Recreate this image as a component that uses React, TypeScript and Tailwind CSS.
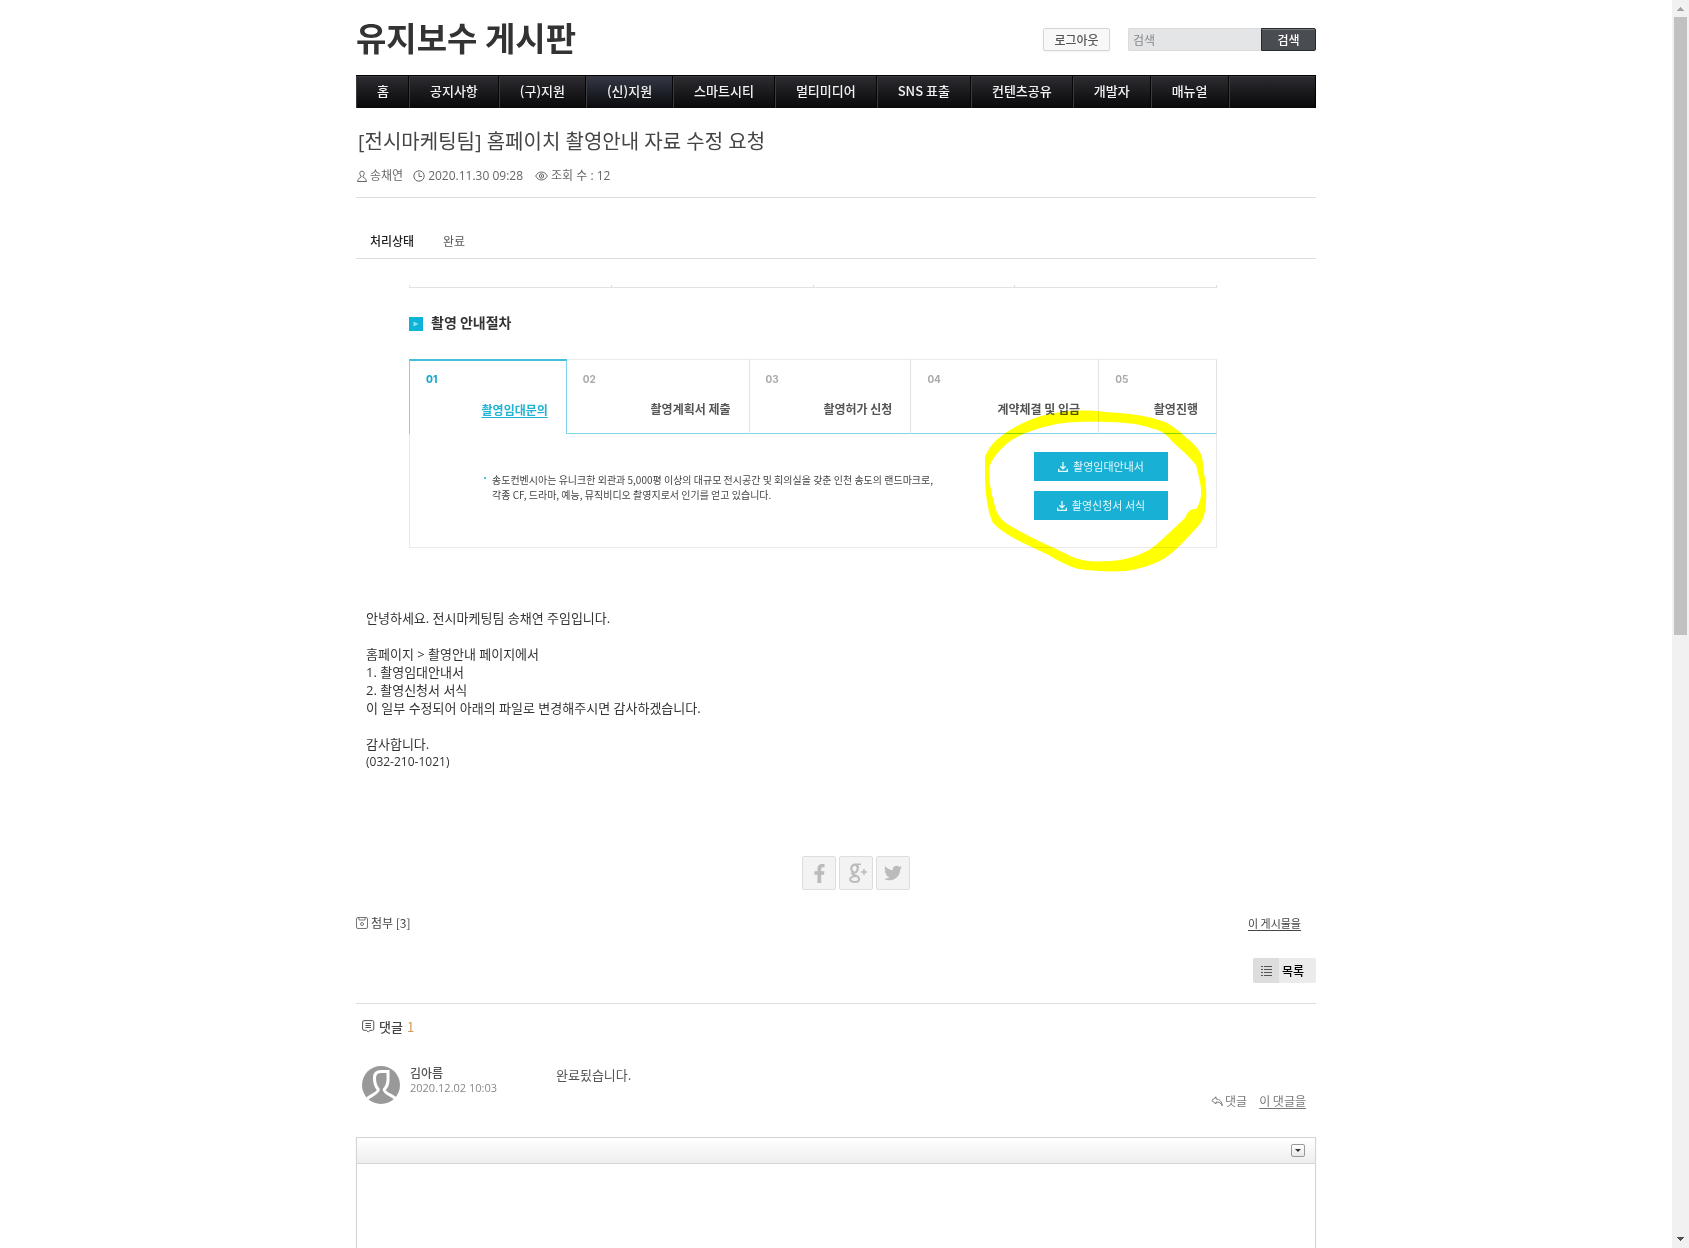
import React from "react";
import { FaFacebookF, FaTwitter } from "react-icons/fa";

const menu = ["홈", "공지사항", "(구)지원", "(신)지원", "스마트시티", "멀티미디어", "SNS 표출", "컨텐츠공유", "개발자", "매뉴얼"];
const activeMenu = "(신)지원";

const steps = [
  { no: "01", label: "촬영임대문의" },
  { no: "02", label: "촬영계획서 제출" },
  { no: "03", label: "촬영허가 신청" },
  { no: "04", label: "계약체결 및 입금" },
  { no: "05", label: "촬영진행" },
];

function Header() {
  return (
    <header>
      <div className="flex h-[75px] items-start justify-between">
        <h1 className="mt-[13px] text-[33px] leading-12 font-bold text-[#333]">
          <a href="#home">유지보수 게시판</a>
        </h1>
        <div className="mt-7 flex">
          <button className="h-[23px] w-[67px] rounded-xs border border-[#d3d6d8] bg-[#f8f8f8] text-[12px] leading-5 font-medium text-[#555] shadow-xs">
            로그아웃
          </button>
          <form className="ml-[18px] flex">
            <input
              type="text"
              aria-label="검색어"
              placeholder="검색"
              className="h-[23px] w-[133px] rounded-l-xs border border-r-0 border-[#d9dbdc] bg-[#e4e5e7] px-1 text-[12px] leading-5 placeholder:text-[#85878a]"
            />
            <button
              type="button"
              className="h-[23px] w-[55px] rounded-r-xs border border-[#26292e] bg-[#494d51] text-[12px] leading-5 font-medium text-white inset-shadow-[0_1px_0_#75797e]"
            >
              검색
            </button>
          </form>
        </div>
      </div>
      <nav className="flex h-[33px] border-t border-r border-black bg-linear-to-b from-[#2d2d32] to-[#09090a] inset-shadow-[0_1px_0_#3c3c40]">
        {menu.map((m) => (
          <a
            key={m}
            href="#menu"
            className={
              "flex items-center border-r border-l border-r-[#050506] border-l-[#3b3b3f] px-5 pb-0.5 text-[13px] font-medium text-[#f2f2f2] first:pr-[19px] " +
              (m === activeMenu ? "bg-linear-to-b from-[#363a47] to-[#0a0b0d]" : "")
            }
          >
            {m}
          </a>
        ))}
        <span className="border-l border-[#3b3b3f]" />
      </nav>
    </header>
  );
}

function PersonIcon() {
  return (
    <svg width="12" height="13" viewBox="0 0 12 13" fill="none" stroke="currentColor">
      <path d="M6 1.2c-1.500 0-2.200.8-2.200 2.200 0 1.200.6 2.100 1.200 2.600v1.200C4.200 7.500 2.200 8.200 1.500 11.500h9C9.800 8.200 7.800 7.500 7 7.200V6c.6-.5 1.200-1.400 1.200-2.600C8.200 2 7.500 1.200 6 1.200z" />
    </svg>
  );
}

function ClockIcon() {
  return (
    <svg width="12" height="12" viewBox="0 0 12 12" fill="none" stroke="currentColor">
      <circle cx="6" cy="6" r="5.200" />
      <path d="M6 2.500V6.500H9" />
    </svg>
  );
}

function EyeIcon() {
  return (
    <svg width="13" height="10" viewBox="0 0 13 10" fill="none" stroke="currentColor">
      <path d="M.7 5C2 2.500 4 1 6.500 1S11 2.500 12.300 5C11 7.500 9 9 6.500 9S2 7.500.7 5z" />
      <circle cx="6.500" cy="5" r="2.200" />
      <circle cx="6.500" cy="5" r=".6" />
    </svg>
  );
}

function DownloadIcon() {
  return (
    <svg width="10" height="10" viewBox="0 0 9 9" fill="none" stroke="currentColor" strokeWidth="1.200">
      <path d="M4.500 0v6M2.200 3.800l2.300 2.300 2.300-2.300" />
      <path d="M.6 6v2.400h7.800V6" />
    </svg>
  );
}

function Guide() {
  return (
    <section className="relative mr-[99px] ml-[53px] text-[#444]">
      <div className="grid h-[3px] grid-cols-4 border-b border-l border-[#e2e2e2]">
        <i className="border-r border-[#dcdcdc]" />
        <i className="border-r border-[#dcdcdc]" />
        <i className="border-r border-[#dcdcdc]" />
        <i className="border-r border-[#dcdcdc]" />
      </div>
      <h3 className="mt-[22px] flex h-6 items-center gap-2 text-[14px] font-bold text-[#333]">
        <svg width="14" height="14" viewBox="0 0 14 14" className="mt-[3px]">
          <path d="M0 0h14v14H0z" fill="#0eb4d8" />
          <path d="M4.500 4.500l5 2.500-5 2.500z" fill="#8fe0f0" />
        </svg>
        촬영 안내절차
      </h3>
      <ol className="mt-[25px] grid h-[75px] grid-cols-[158fr_183fr_162fr_188fr_118fr]">
        {steps.map((s, i) => (
          <li
            key={s.no}
            className={
              "flex flex-col justify-between pr-[18px] pb-3.5 pl-4 " +
              (i === 0
                ? "border-x border-t-2 border-x-[#7fd5e8] border-t-[#42bfdb] pt-2.5 text-[#1fb2d4]"
                : "border-t border-r border-b border-t-[#ebebeb] border-r-[#e2e2e2] border-b-[#7fd5e8] pt-[11px] text-[#555]")
            }
          >
            <span
              className={
                "font-['Inter'] text-[10px] leading-4 " + (i === 0 ? "font-extrabold text-[#1ba9c9]" : "font-bold text-[#aaa]")
              }
            >
              {s.no}
            </span>
            <a
              href="#step"
              className={"self-end text-[12px] leading-5 font-bold whitespace-nowrap " + (i === 0 ? "underline underline-offset-2" : "")}
            >
              {s.label}
            </a>
          </li>
        ))}
      </ol>
      <div className="flex h-[114px] items-start justify-between border-x border-b border-[#e9e9e9] pr-12">
        <p className="relative mt-[38px] ml-[82px] text-[10px] leading-[15px] whitespace-nowrap">
          <i className="absolute top-[5px] -left-2 size-0.5 bg-[#4cc6de]" />
          송도컨벤시아는 유니크한 외관과 5,000평 이상의 대규모 전시공간 및 회의실을 갖춘 인천 송도의 랜드마크로,
          <br />
          각종 CF, 드라마, 예능, 뮤직비디오 촬영지로서 인기를 얻고 있습니다.
        </p>
        <div className="mt-[18px] flex w-[134px] flex-col gap-2.5">
          {["촬영임대안내서", "촬영신청서 서식"].map((t) => (
            <button
              key={t}
              className="flex h-[29px] items-center justify-center gap-[5px] bg-[#18b1d5] text-[11px] whitespace-nowrap text-[#e4f7fb]"
            >
              <DownloadIcon />
              {t}
            </button>
          ))}
        </div>
      </div>
      <svg
        className="pointer-events-none absolute top-[124px] right-[10px] mix-blend-multiply"
        width="222"
        height="163"
        viewBox="0 0 222 166"
        preserveAspectRatio="none"
      >
        <path
          fillRule="evenodd"
          fill="#ff0"
          d="M76 3C90 1 106 1 120 3C143 4 165 7 182 14C190 19 196 24 201 29C208 34 213 40 217 48L219 65C222 81 222 96 219 109C217 115 214 119 208 125C198 136 188 147 178 153C165 160 153 163 141 165C125 166 108 165 93 163C84 160 73 155 64 149L35 135C26 130 13 122 8 116C3 106 1 90 0 75V48C4 40 7 36 12 31C27 18 51 6 76 3zM104 13C90 13 75 14 64 17C48 21 33 26 21 36C12 45 6 52 4 61C4 73 6 85 9 95C11 105 14 111 21 116C38 128 61 137 80 147C92 154 104 156 118 155C139 155 157 149 169 140C180 130 191 120 200 111C203 104 206 101 211 102C213 99 215 95 216 88C217 80 214 71 213 65L211 57C205 49 196 41 187 33C183 27 177 22 168 20C153 14 130 13 104 13z"
        />
      </svg>
    </section>
  );
}

function Article() {
  return (
    <article className="font-['Open_Sans','Noto_Sans_CJK_KR',sans-serif]">
      <div className="h-[90px] border-b border-[#ddd]">
        <h2 className="pt-[18px] pl-0.5 text-[20px] leading-8 text-[#444]">[전시마케팅팀] 홈페이치 촬영안내 자료 수정 요청</h2>
        <div className="mt-2 flex h-5 items-center text-[12px] text-[#666]">
          <PersonIcon />
          <a href="#member" className="ml-0.5">송채연</a>
          <span className="ml-2.5 flex items-center gap-[3px]">
            <ClockIcon />
            2020.11.30 09:28
          </span>
          <span className="ml-3 flex items-center gap-[3px]">
            <EyeIcon />
            조회 수 : 12
          </span>
        </div>
      </div>
      <dl className="flex h-[61px] items-end border-b border-[#ddd] pb-1.5 pl-3.5 text-[12px] leading-5">
        <dt className="w-[73px] font-medium text-[#222]">처리상태</dt>
        <dd className="text-[#555]">완료</dd>
      </dl>
      <div className="pt-[26px] font-['Noto_Sans_CJK_KR',sans-serif]">
        <Guide />
      </div>
      <div className="mt-[61px] ml-2.5 text-[13px] leading-[18px] text-[#333]">
        <p>안녕하세요. 전시마케팅팀 송채연 주임입니다.</p>
        <br />
        <p>홈페이지 &gt; 촬영안내 페이지에서</p>
        <p>1. 촬영임대안내서</p>
        <p>2. 촬영신청서 서식</p>
        <p>이 일부 수정되어 아래의 파일로 변경해주시면 감사하겠습니다.</p>
        <br />
        <p>감사합니다.</p>
        <p className="text-[12px]">(032-210-1021)</p>
      </div>
    </article>
  );
}

const shareButton = "flex size-[34px] items-center justify-center rounded-xs border border-[#dedede] bg-[#f3f3f3] text-[#bbb]";

function ArticleFooter() {
  return (
    <div>
      <div className="mt-[85px] flex justify-center gap-[3px] pl-10">
        <a href="#facebook" aria-label="Facebook" className={shareButton}>
          <FaFacebookF size={19} />
        </a>
        <a href="#google" aria-label="Google+" className={shareButton}>
          <svg width="20" height="20" viewBox="0 0 20 20" fill="none" stroke="currentColor" className="ml-1">
            <ellipse cx="6.500" cy="5.600" rx="3.200" ry="3.900" strokeWidth="2.200" />
            <path d="M7 1.200h6M9 2l1.800 2.500" strokeWidth="1.500" />
            <path d="M5 9.500c-2.200 1.500.3 2.100 2 2.700C12.500 14 12.500 18.900 7 19c-6.800 0-6.500-5.200 1-6" strokeWidth="2" />
            <path d="M16 6v6M13 9h6" strokeWidth="1.500" />
          </svg>
        </a>
        <a href="#twitter" aria-label="Twitter" className={shareButton}>
          <FaTwitter size={18} />
        </a>
      </div>
      <div className="mt-[23px] flex h-5 items-center justify-between pr-[15px] text-[12px] text-[#444]">
        <button className="flex items-center gap-[3px]">
          <svg width="12" height="12" viewBox="0 0 12 12" fill="none" stroke="#777">
            <rect x=".5" y=".5" width="11" height="11" rx="1.500" />
            <path d="M3 .5v2.500h6V.5" />
            <circle cx="6" cy="7" r="1.500" />
          </svg>
          첨부 [3]
        </button>
        <a href="#document" className="text-[11px] underline underline-offset-2">이 게시물을</a>
      </div>
      <div className="mt-[25px] flex justify-end">
        <a href="#list" className="flex h-[25px] w-[63px] overflow-hidden rounded-xs bg-[#ebebeb] text-[12px] leading-[25px] font-medium text-black">
          <span className="mr-[3px] flex w-[26px] items-center justify-center bg-[#ddd]">
            <svg width="11" height="11" viewBox="0 0 11 11" stroke="#555" className="mb-px">
              <path d="M0 1.500h2M3 1.500h8M0 4.500h2M3 4.500h8M0 7.500h2M3 7.500h8M0 10.500h2M3 10.500h8" />
            </svg>
          </span>
          목록
        </a>
      </div>
    </div>
  );
}

function Comments() {
  return (
    <section className="mt-5 border-t border-[#ddd]">
      <h2 className="mt-[13px] ml-1.5 flex h-5 items-center gap-1 text-[13px] font-medium text-[#444]">
        <svg width="13" height="13" viewBox="0 0 13 13" fill="none" stroke="#555" className="mb-0.5">
          <path d="M2 .6h8.500c.8 0 1.300.5 1.300 1.300V9c0 .8-.5 1.300-1.300 1.300H8L6.200 12 4.500 10.300H2C1.200 10.300.6 9.800.6 9V1.900C.6 1.100 1.200.6 2 .6z" />
          <path d="M3.500 3.500h5.500M3.500 5.500h5.500M3.500 7.500h5.500" />
        </svg>
        댓글 <span className="font-normal text-[#d09a5a]">1</span>
      </h2>
      <article className="mt-7 flex h-[72px] pr-2.5 pl-1.5">
        <svg width="38" height="38" viewBox="0 0 38 38" className="mt-px">
          <circle cx="19" cy="19" r="19" fill="#999" />
          <path
            d="M5.500 32.500C9 29 16 27.500 16.300 23.500C13.500 20.500 12.500 17 12.500 12C12.500 7.500 15 5.500 19 5.500H26V10C26.500 16 25.500 20.500 22.200 23.500C22.500 27.500 29.500 29 33.500 32.500"
            fill="none"
            stroke="#fff"
            strokeWidth="3"
          />
        </svg>
        <div className="ml-2.5 w-[146px] text-[11px] leading-[15px] text-[#888]">
          <h3 className="text-[12px] font-medium text-[#555]">
            <a href="#member">김아름</a>
          </h3>
          <p className="font-['Open_Sans']">2020.12.02 10:03</p>
        </div>
        <p className="text-[13px] leading-5 text-[#555]">완료됬습니다.</p>
        <div className="mb-[26px] ml-auto flex h-5 items-center self-end text-[12px] text-[#777]">
          <a href="#reply" className="flex items-center gap-0.5">
            <svg width="12" height="11" viewBox="0 0 12 11" fill="none" stroke="currentColor">
              <path d="M5 .8.800 4.500 5 8V6c3 0 5 .8 6.300 3.800C11 5.500 8.500 3.200 5 3z" />
            </svg>
            댓글
          </a>
          <a href="#comment" className="ml-3 underline underline-offset-2">이 댓글을</a>
        </div>
      </article>
      <div className="border border-[#d3d5d5] shadow-xs">
        <div className="flex h-[26px] items-center justify-end border-b border-[#d3d5d5] bg-linear-to-b from-white to-[#eee] pr-2.5">
          <button
            aria-label="도구 모음 펼치기"
            className="flex h-[13px] w-3.5 items-center justify-center rounded-xs border border-[#999] bg-linear-to-b from-white to-[#e8e8e8]"
          >
            <svg width="6" height="3" viewBox="0 0 6 3">
              <path d="M0 0h6L3 3z" fill="#333" />
            </svg>
          </button>
        </div>
        <textarea aria-label="댓글 내용" className="block h-40 w-full resize-none" />
      </div>
    </section>
  );
}

function ScrollRail() {
  return (
    <aside aria-hidden="true" className="flex w-[17px] flex-none flex-col items-center bg-[#f1f1f1]">
      <svg width="7" height="4" viewBox="0 0 7 4" className="mt-[7px]" shapeRendering="crispEdges">
        <path d="M3 0h1v1h1v1h1v1h1v1H0V3h1V2h1V1h1z" fill="#a3a3a3" />
      </svg>
      <div className="mt-1.5 h-[49.5%] w-[13px] bg-[#c1c1c1]" />
      <svg width="7" height="4" viewBox="0 0 7 4" className="mt-auto mb-[7px]" shapeRendering="crispEdges">
        <path d="M0 0h7v1H6v1H5v1H4v1H3V3H2V2H1V1H0z" fill="#505050" />
      </svg>
    </aside>
  );
}

export default function App() {
  return (
    <div className="flex h-screen overflow-hidden bg-white font-['Noto_Sans_CJK_KR',sans-serif]">
      <main className="min-w-0 flex-1 overflow-hidden">
        <div className="mx-auto max-w-[960px]">
          <Header />
          <Article />
          <ArticleFooter />
          <Comments />
        </div>
      </main>
      <ScrollRail />
    </div>
  );
}
